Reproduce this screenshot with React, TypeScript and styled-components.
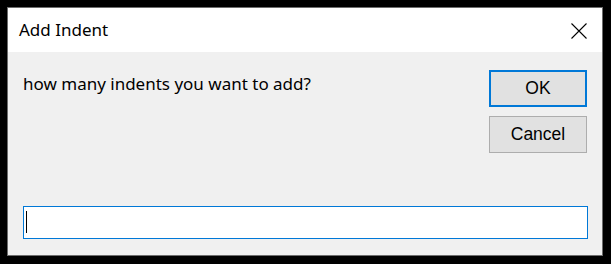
import React from 'react';
import styled, { createGlobalStyle } from 'styled-components';

const GlobalStyle = createGlobalStyle`
  html, body {
    margin: 0;
    padding: 0;
    background: #000000;
  }
  body {
    width: 611px;
    height: 264px;
    overflow: hidden;
  }
`;

const Screen = styled.div`
  width: 611px;
  height: 264px;
  padding: 7px 0 0 7px;
  box-sizing: border-box;
`;

const Window = styled.div`
  width: 596px;
  height: 249px;
  box-sizing: border-box;
  border: 1px solid #6d6d6d;
  display: flex;
  flex-direction: column;
  background: #f0f0f0;
`;

const TitleBar = styled.div`
  height: 44px;
  flex-shrink: 0;
  background: #ffffff;
  display: flex;
  align-items: center;
  justify-content: space-between;
  padding: 0 15px 0 11px;
`;

const Title = styled.span`
  font-family: 'Noto Sans', sans-serif;
  font-size: 17px;
  color: #000000;
  padding-bottom: 2px;
`;

const CloseButton = styled.button`
  width: 16px;
  height: 16px;
  padding: 0;
  border: none;
  background: none;
  display: flex;
  margin-top: 1px;
`;

const Body = styled.div`
  flex: 1;
  display: flex;
  flex-direction: column;
  justify-content: space-between;
  padding: 18px 14px 16px 15px;
`;

const TopRow = styled.div`
  display: flex;
  justify-content: space-between;
  align-items: flex-start;
`;

const Message = styled.p`
  margin: 2px 0 0;
  font-family: 'Noto Sans', sans-serif;
  font-size: 17px;
  color: #000000;
`;

const Buttons = styled.div`
  display: flex;
  flex-direction: column;
  gap: 9px;
  margin-right: 1px;
`;

const Button = styled.button<{ $default?: boolean }>`
  width: 98px;
  height: 37px;
  box-sizing: border-box;
  background: #e1e1e1;
  border: ${(p) => (p.$default ? '2px solid #0078d7' : '1px solid #adadad')};
  font-family: 'Liberation Sans', Arial, sans-serif;
  font-size: 17.5px;
  color: #000000;
  padding: 0;
`;

const Input = styled.div`
  height: 33px;
  box-sizing: border-box;
  border: 1px solid #0078d7;
  background: #ffffff;
  display: flex;
  align-items: center;
  padding-left: 2px;
`;

const Caret = styled.span`
  width: 1px;
  height: 22px;
  background: #000000;
  margin-top: -2px;
`;

export default function App() {
  return (
    <>
      <GlobalStyle />
      <Screen>
        <Window>
          <TitleBar>
            <Title>Add Indent</Title>
            <CloseButton aria-label="Close">
              <svg width="16" height="16" viewBox="0 0 16 16">
                <path d="M0.5 0.5L15.5 15.5M15.5 0.5L0.5 15.5" stroke="#000" strokeWidth="1.1" />
              </svg>
            </CloseButton>
          </TitleBar>
          <Body>
            <TopRow>
              <Message>how many indents you want to add?</Message>
              <Buttons>
                <Button $default>OK</Button>
                <Button>Cancel</Button>
              </Buttons>
            </TopRow>
            <Input>
              <Caret />
            </Input>
          </Body>
        </Window>
      </Screen>
    </>
  );
}
